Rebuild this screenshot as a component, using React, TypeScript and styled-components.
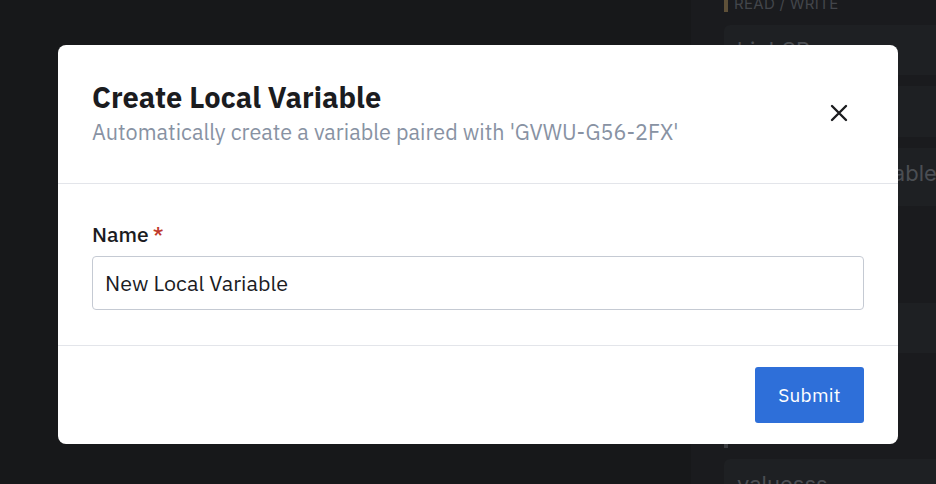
import React from "react";
import styled, { createGlobalStyle } from "styled-components";

const Global = createGlobalStyle`
  html, body { margin: 0; padding: 0; background: #17181a; }
  body { font-family: "IBM Plex Sans", Inter, "Liberation Sans", sans-serif; }
  * { box-sizing: border-box; }
`;

const Page = styled.div`
  width: 936px;
  height: 484px;
  display: flex;
  overflow: hidden;
  position: relative;
  background: #17181a;
`;

const Main = styled.div`
  width: 691px;
  flex: none;
  background: #17181a;
`;

const Side = styled.div`
  flex: 1;
  background: #1a1b1e;
  padding: 0 0 0 33px;
  display: flex;
  flex-direction: column;
  margin-top: -8px;
`;

const SideLabel = styled.div<{ $bar: string; $mt: number; $barH: number }>`
  flex: none;
  display: flex;
  align-items: flex-start;
  gap: 6px;
  height: 24px;
  line-height: 24px;
  margin-top: ${(p) => p.$mt}px;
  font-family: Inter, "Liberation Sans", sans-serif;
  font-size: 15px;
  letter-spacing: 0.3px;
  color: #43464b;
  &::before {
    content: "";
    flex: none;
    margin-top: 4px;
    width: 4px;
    height: ${(p) => p.$barH}px;
    background: ${(p) => p.$bar};
  }
`;

const SideCard = styled.div<{ $h: number; $mt: number }>`
  flex: none;
  height: ${(p) => p.$h}px;
  margin-top: ${(p) => p.$mt}px;
  background: #1e2023;
  border-radius: 6px 0 0 6px;
  padding: 12px 13px;
  font-family: Inter, "Liberation Sans", sans-serif;
  font-size: 22px;
  line-height: 26px;
  color: #4b4e53;
  white-space: nowrap;
  overflow: hidden;
`;

const Backdrop = styled.div`
  position: absolute;
  inset: 0;
  display: flex;
  align-items: flex-start;
  justify-content: flex-start;
  padding: 45px 0 0 58px;
`;

const Modal = styled.div`
  width: 840px;
  height: 399px;
  background: #ffffff;
  border-radius: 8px;
  display: flex;
  flex-direction: column;
  overflow: hidden;
`;

const Header = styled.div`
  flex: none;
  display: flex;
  align-items: flex-start;
  justify-content: space-between;
  padding: 35px 48px 0 34px;
  height: 139px;
  border-bottom: 1px solid #e3e5ea;
`;

const TitleBlock = styled.div`
  display: flex;
  flex-direction: column;
  gap: 5px;
`;

const Title = styled.h2`
  margin: 0;
  font-size: 29px;
  font-weight: 700;
  line-height: 34px;
  color: #1b1c1f;
`;

const Subtitle = styled.p`
  margin: 0;
  font-size: 21.6px;
  line-height: 26px;
  color: #8892a3;
`;

const CloseButton = styled.button`
  margin-top: 22px;
  width: 22px;
  height: 22px;
  border: none;
  background: none;
  padding: 0;
  display: flex;
  align-items: center;
  justify-content: center;
  color: #1b1c1f;
`;

const Body = styled.div`
  flex: none;
  padding: 37px 34px 0 34px;
  height: 162px;
  border-bottom: 1px solid #e3e5ea;
  display: flex;
  flex-direction: column;
  gap: 9px;
`;

const Label = styled.label`
  font-size: 21px;
  font-weight: 500;
  line-height: 26px;
  color: #1b1c1f;
  display: flex;
  gap: 4px;
`;

const Required = styled.span`
  color: #c0392b;
`;

const Input = styled.input`
  width: 772px;
  height: 54px;
  border: 1px solid #c5cad3;
  border-radius: 4px;
  padding: 0 12px;
  font-family: inherit;
  font-size: 21.5px;
  color: #1b1c1f;
  outline: none;
`;

const Footer = styled.div`
  flex: 1;
  display: flex;
  justify-content: flex-end;
  align-items: flex-start;
  padding: 21px 34px 0 34px;
`;

const SubmitButton = styled.button`
  width: 109px;
  height: 56px;
  background: #2e6fd9;
  border: none;
  border-radius: 3px;
  color: #ffffff;
  font-family: inherit;
  font-size: 19px;
  letter-spacing: 0.3px;
`;

export default function App() {
  return (
    <>
      <Global />
      <Page>
        <Main />
        <Side>
          <SideLabel $bar="#5e5038" $mt={0} $barH={16}>READ / WRITE</SideLabel>
          <SideCard $h={50} $mt={9}>highSP</SideCard>
          <SideCard $h={51} $mt={11}>value</SideCard>
          <SideCard $h={58} $mt={11}>New Local Variable</SideCard>
          <SideCard $h={50} $mt={97}>value</SideCard>
          <SideLabel $bar="#3a3c40" $mt={64} $barH={27}>VALUES</SideLabel>
          <SideCard $h={60} $mt={18}>valuesss</SideCard>
        </Side>
        <Backdrop>
          <Modal>
            <Header>
              <TitleBlock>
                <Title>Create Local Variable</Title>
                <Subtitle>Automatically create a variable paired with 'GVWU-G56-2FX'</Subtitle>
              </TitleBlock>
              <CloseButton aria-label="Close">
                <svg width="18" height="18" viewBox="0 0 18 18">
                  <path d="M2 2 L16 16 M16 2 L2 16" stroke="currentColor" strokeWidth="2.4" strokeLinecap="round" />
                </svg>
              </CloseButton>
            </Header>
            <Body>
              <Label>
                Name<Required>*</Required>
              </Label>
              <Input defaultValue="New Local Variable" />
            </Body>
            <Footer>
              <SubmitButton>Submit</SubmitButton>
            </Footer>
          </Modal>
        </Backdrop>
      </Page>
    </>
  );
}
